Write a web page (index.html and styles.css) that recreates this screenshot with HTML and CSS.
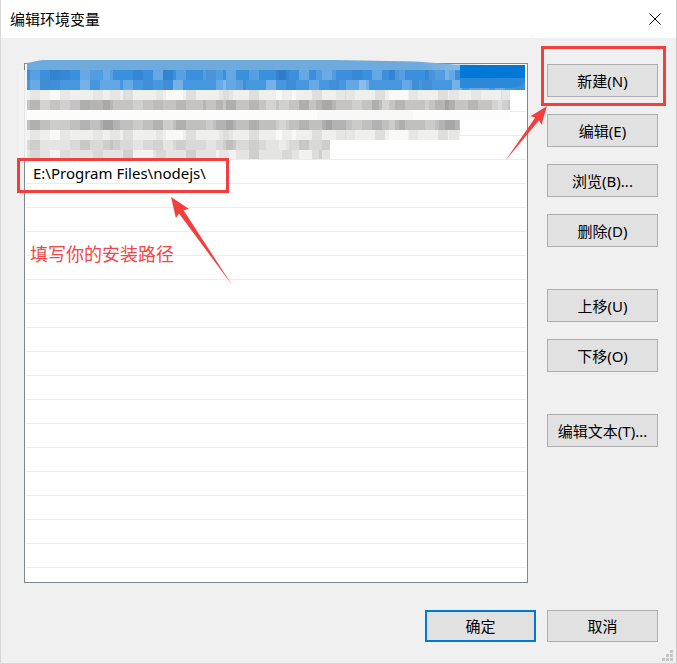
FILE: index.html
```html
<!DOCTYPE html>
<html lang="zh-CN">
<head>
<meta charset="utf-8">
<title>编辑环境变量</title>
<link rel="stylesheet" href="styles.css">
</head>
<body>
<div class="window">
  <div class="titlebar">
    <span class="title">编辑环境变量</span>
    <svg class="close" width="12" height="12" viewBox="0 0 12 12"><path d="M0.5 0.5 L11.5 11.5 M11.5 0.5 L0.5 11.5" stroke="#000" stroke-width="1" fill="none"/></svg>
  </div>
  <div class="content">
    <div class="main">
      <div class="list">
        <div class="row"></div>
        <div class="row"></div>
        <div class="row"></div>
        <div class="row"></div>
        <div class="row"><span class="path">E:\Program Files\nodejs\</span></div>
        <div class="row"></div>
        <div class="row"></div>
        <div class="row"></div>
        <div class="row"></div>
        <div class="row"></div>
        <div class="row"></div>
        <div class="row"></div>
        <div class="row"></div>
        <div class="row"></div>
        <div class="row"></div>
        <div class="row"></div>
        <div class="row"></div>
        <div class="row"></div>
        <div class="row"></div>
        <div class="row"></div>
        <div class="row"></div>
        <div class="mosaic">
          <div class="band haze"></div>
          <div class="band blue1"></div>
          <div class="band blue2"></div>
          <div class="band light w1"></div>
          <div class="band mid w1"></div>
          <div class="band white w1"></div>
          <div class="band mid2 w2"></div>
          <div class="band light w2"></div>
          <div class="band midl w3"></div>
          <div class="band light2 w3"></div>
          <div class="sel"></div>
          <div class="smear"></div>
        </div>
      </div>
      <div class="side">
        <button class="btn">新建(N)</button>
        <button class="btn">编辑(E)</button>
        <button class="btn">浏览(B)...</button>
        <button class="btn">删除(D)</button>
        <button class="btn sep">上移(U)</button>
        <button class="btn">下移(O)</button>
        <button class="btn sep">编辑文本(T)...</button>
      </div>
    </div>
    <div class="footer">
      <button class="btn primary">确定</button>
      <button class="btn">取消</button>
    </div>
  </div>

  <svg class="annot" width="677" height="664" viewBox="0 0 677 664">
    <rect x="18.5" y="159.5" width="209" height="32" fill="none" stroke="#f43d3d" stroke-width="3"/>
    <rect x="542.5" y="47.5" width="122" height="57" fill="none" stroke="#f43d3d" stroke-width="3"/>
    <g transform="translate(232 285) rotate(-124.73)">
      <path d="M0 0 L89 -2.8 L87 -8 L107 0 L87 8 L89 2.8 Z" fill="#f43d3d"/>
    </g>
    <g transform="translate(505 161) rotate(-52.63)">
      <path d="M0 0 L53 -2.4 L51 -7 L69 0 L51 7 L53 2.4 Z" fill="#f43d3d"/>
    </g>
  </svg>
  <div class="note">填写你的安装路径</div>
  <svg class="grip" width="12" height="12" viewBox="0 0 12 12">
    <rect x="8" y="0" width="3" height="3" fill="#c4c4c4"/>
    <rect x="4" y="4" width="3" height="3" fill="#c4c4c4"/>
    <rect x="8" y="4" width="3" height="3" fill="#c4c4c4"/>
    <rect x="0" y="8" width="3" height="3" fill="#c4c4c4"/>
    <rect x="4" y="8" width="3" height="3" fill="#c4c4c4"/>
    <rect x="8" y="8" width="3" height="3" fill="#c4c4c4"/>
  </svg>
</div>
</body>
</html>
```
FILE: styles.css
```css
* { box-sizing: border-box; }
html, body { margin: 0; padding: 0; }
body {
  background: #f0f0f0;
  font-family: "Noto Sans", "Noto Sans CJK SC", sans-serif;
  color: #000;
}
.window {
  position: relative;
  width: 677px;
  height: 664px;
  border-left: 1px solid #d6d6d6;
  border-right: 1px solid #c8c8c8;
  border-bottom: 1px solid #d6d6d6;
  background: #f0f0f0;
  display: flex;
  flex-direction: column;
  overflow: hidden;
}
.titlebar {
  height: 38px;
  flex: none;
  background: #fff;
  display: flex;
  align-items: center;
  justify-content: space-between;
  padding: 0 15px 0 9px;
}
.title {
  font-family: "Noto Sans CJK SC", sans-serif;
  font-size: 15px;
  line-height: 20px;
}
.close { display: block; }
.content {
  flex: 1;
  display: flex;
  flex-direction: column;
  padding: 25px 18px 0 23px;
}
.main {
  display: flex;
  gap: 19px;
}
.list {
  position: relative;
  width: 504px;
  height: 520px;
  border: 1px solid #828790;
  background: #fff;
}
.row {
  height: 24px;
  border-bottom: 1px solid #ececec;
  margin: 0 1px;
  display: flex;
  align-items: center;
  padding: 2px 0 0 7px;
}
.path {
  font-family: "Noto Sans", "Noto Sans CJK SC", sans-serif;
  font-size: 15px;
  line-height: 18px;
  white-space: nowrap;
}
.mosaic {
  position: absolute;
  left: 2px;
  top: -4px;
  width: 498px;
}
.band {
  height: 10px;
  background-color: #ddd;
}
.haze {
  background: linear-gradient(90deg, #6eaadc 0 79%, #86b7e2 86%, rgba(160,200,235,0.6) 100%);
  clip-path: polygon(0 30%, 3% 0, 62% 0, 78% 15%, 86% 45%, 100% 55%, 100% 100%, 0 100%);
}
.blue1 {
  background:
    repeating-linear-gradient(90deg, transparent 0 3px, rgba(255,255,255,.14) 3px 13px, transparent 13px 33px, rgba(0,40,120,.08) 33px 43px, transparent 43px 53px, rgba(255,255,255,.22) 53px 63px, transparent 63px 73px),
    repeating-linear-gradient(90deg, transparent 0 23px, rgba(0,60,140,.14) 23px 33px, transparent 33px 63px, rgba(255,255,255,.12) 63px 83px, transparent 83px 113px),
    #3a90dd;
}
.blue2 {
  background:
    repeating-linear-gradient(90deg, transparent 0 3px, rgba(255,255,255,.18) 3px 13px, transparent 13px 23px, rgba(0,40,120,.07) 23px 33px, transparent 33px 53px, rgba(255,255,255,.25) 53px 63px, transparent 63px 93px),
    repeating-linear-gradient(90deg, transparent 0 13px, rgba(0,60,140,.1) 13px 23px, transparent 23px 73px, rgba(255,255,255,.16) 73px 93px, transparent 93px 123px),
    #4597e0;
}
.sel {
  position: absolute;
  left: 433px;
  top: 5px;
  width: 65px;
  height: 23px;
  background: linear-gradient(180deg, #0078d7 0 55%, #2c88d9 55%);
  border-bottom-right-radius: 16px 8px;
}
.w1 { width: 483px; }
.w2 { width: 433px; }
.w3 { width: 303px; }
.light {
  background:
    repeating-linear-gradient(90deg, transparent 0 3px, rgba(0,0,0,.04) 3px 13px, transparent 13px 33px, rgba(0,0,0,.07) 33px 43px, transparent 43px 63px),
    repeating-linear-gradient(90deg, transparent 0 23px, rgba(255,255,255,.6) 23px 43px, transparent 43px 83px, rgba(0,0,0,.04) 83px 93px, transparent 93px 113px),
    #efefee;
}
.light2 {
  height: 9px;
  background:
    repeating-linear-gradient(90deg, transparent 0 3px, rgba(0,0,0,.05) 3px 13px, transparent 13px 33px, rgba(0,0,0,.09) 33px 43px, transparent 43px 63px),
    repeating-linear-gradient(90deg, transparent 0 23px, rgba(255,255,255,.5) 23px 43px, transparent 43px 83px),
    #e4e4e3;
}
.mid {
  background:
    repeating-linear-gradient(90deg, transparent 0 3px, rgba(0,0,0,.07) 3px 13px, transparent 13px 33px, rgba(255,255,255,.2) 33px 43px, transparent 43px 53px, rgba(0,0,0,.11) 53px 63px, transparent 63px 73px),
    repeating-linear-gradient(90deg, transparent 0 13px, rgba(255,255,255,.25) 13px 23px, transparent 23px 63px, rgba(0,0,0,.08) 63px 83px, transparent 83px 113px),
    #c5c4c3;
}
.mid2 {
  background:
    repeating-linear-gradient(90deg, transparent 0 3px, rgba(0,0,0,.09) 3px 13px, transparent 13px 33px, rgba(255,255,255,.18) 33px 43px, transparent 43px 53px, rgba(0,0,0,.07) 53px 63px, transparent 63px 73px),
    repeating-linear-gradient(90deg, transparent 0 23px, rgba(255,255,255,.2) 23px 33px, transparent 33px 73px, rgba(0,0,0,.07) 73px 93px, transparent 93px 113px),
    #c0c0bf;
}
.midl {
  background:
    repeating-linear-gradient(90deg, transparent 0 3px, rgba(0,0,0,.05) 3px 13px, transparent 13px 33px, rgba(255,255,255,.3) 33px 43px, transparent 43px 53px, rgba(0,0,0,.08) 53px 63px, transparent 63px 73px),
    repeating-linear-gradient(90deg, transparent 0 13px, rgba(255,255,255,.3) 13px 33px, transparent 33px 83px, rgba(0,0,0,.05) 83px 93px, transparent 93px 113px),
    #d9d9d8;
}
.white {
  background: linear-gradient(90deg, #fcfcfc 0 60%, #f8f8f8 60% 80%, #fcfcfc 80%);
}
.smear {
  position: absolute;
  left: -8px;
  top: 10px;
  width: 8px;
  height: 90px;
  background: rgba(244,244,244,.85);
  border-radius: 4px;
}
.side {
  display: flex;
  flex-direction: column;
  gap: 17px;
  padding-top: 1px;
}
.btn {
  width: 111px;
  height: 33px;
  margin: 0;
  padding: 0;
  background: #e1e1e1;
  border: 1px solid #adadad;
  font-family: "Noto Sans", "Noto Sans CJK SC", sans-serif;
  font-size: 15px;
  line-height: 20px;
  color: #000;
  text-align: center;
}
.sep { margin-top: 25px; }
.footer {
  display: flex;
  justify-content: flex-end;
  gap: 11px;
  margin-top: 27px;
}
.footer .btn { height: 32px; }
.primary { border: 2px solid #0078d7; }
.annot {
  position: absolute;
  left: -1px;
  top: 0;
  pointer-events: none;
}
.note {
  position: absolute;
  left: 29px;
  top: 244px;
  font-family: "Noto Sans CJK SC", sans-serif;
  font-size: 18px;
  line-height: 18px;
  color: #f04848;
  white-space: nowrap;
}
.grip {
  position: absolute;
  right: 2px;
  bottom: 1px;
}
```
